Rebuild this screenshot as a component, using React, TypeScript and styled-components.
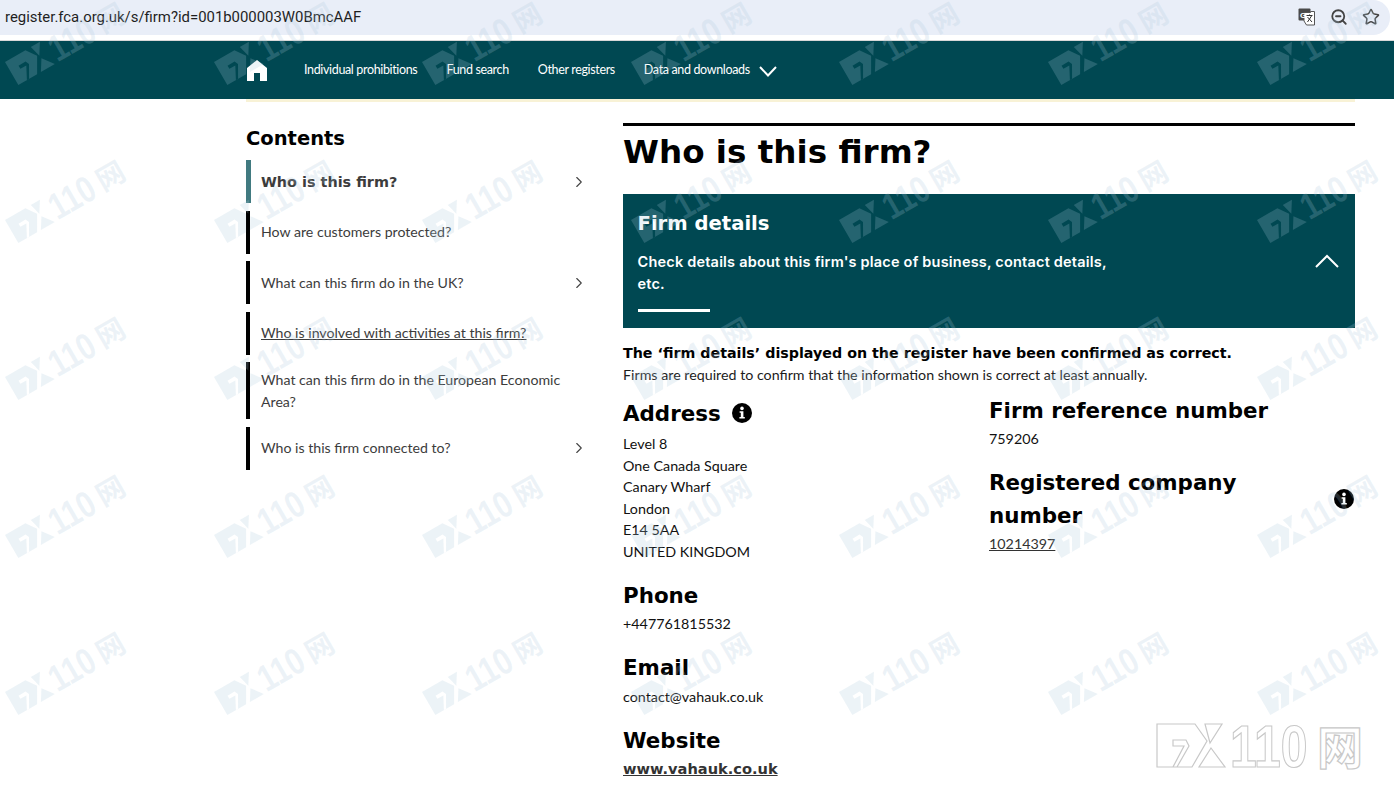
import React from 'react';
import styled, { createGlobalStyle } from 'styled-components';
import { ZoomOut, Star, ChevronRight } from 'lucide-react';

const heading = `'DejaVu Sans', Verdana, sans-serif`;
const body = `Lato, 'Liberation Sans', sans-serif`;

const GlobalStyle = createGlobalStyle`
  html, body {
    margin: 0;
    height: 794px;
    overflow: hidden;
    background: #fff;
    font-family: ${body};
  }
`;

const Page = styled.div`
  position: relative;
  width: 1394px;
  height: 794px;
  overflow: hidden;
`;

const AddressBar = styled.div`
  height: 35px;
  box-sizing: border-box;
  background: #e9eef8;
  border-radius: 0 17px 17px 0;
  margin-right: 4px;
  padding: 0 9px 2px 5px;
  display: flex;
  align-items: center;
  color: #1f1f1f;
`;

const Url = styled.div`
  flex: 1;
  font: 14.9px Roboto, sans-serif;
`;

const BarIcons = styled.div`
  display: flex;
  align-items: center;
  gap: 14px;
  color: #444;
  margin-right: 1px;
`;

const Strip = styled.div`
  height: 5px;
  border-bottom: 1px solid #d8d8d8;
`;

const Nav = styled.nav`
  height: 58px;
  background: #004852;
  padding-left: 247px;
  display: flex;
  align-items: center;
`;

const HomeLink = styled.div`
  display: flex;
  width: 57px;
`;

const NavLink = styled.a`
  color: #fff;
  font-size: 12.5px;
  letter-spacing: -0.35px;
  margin-right: 29px;
  margin-top: -1px;
  white-space: nowrap;
`;

const NavDropdown = styled.svg`
  margin-left: -20px;
  margin-top: 3px;
`;

const Rule = styled.div`
  height: 3px;
  margin: 0 39px 0 246px;
  background: #f8f2d6;
`;

const Content = styled.div`
  margin: 21px 39px 0 246px;
  display: grid;
  grid-template-columns: 344px 732px;
  column-gap: 33px;
`;

const ContentsTitle = styled.h2`
  font: bold 19.5px/24px ${heading};
  color: #000;
  margin: 4px 0 9px;
`;

const Menu = styled.ul`
  list-style: none;
  margin: 0;
  padding: 0;
  display: flex;
  flex-direction: column;
  gap: 7.5px;
`;

const MenuItem = styled.li<{ $active?: boolean }>`
  min-height: 43px;
  box-sizing: border-box;
  border-left: ${(p) => (p.$active ? '5px solid #417a80' : '4px solid #000')};
  padding: 6.5px 0 6.5px ${(p) => (p.$active ? '10px' : '11px')};
  display: flex;
  align-items: center;
  justify-content: space-between;
  color: #3c3c3c;
  font: ${(p) => (p.$active ? `bold 14.4px/22px ${heading}` : `14.15px/22px ${body}`)};
`;

const MenuText = styled.span<{ $underline?: boolean }>`
  max-width: 320px;
  text-decoration: ${(p) => (p.$underline ? 'underline' : 'none')};
`;

const Chevron = styled(ChevronRight)`
  flex: none;
  margin-right: 2px;
  color: #444;
`;

const Main = styled.main`
  border-top: 3px solid #000;
`;

const Title = styled.h1`
  font: bold 32.6px/48px ${heading};
  color: #000;
  margin: 2px 0 18px;
`;

const Hero = styled.section`
  height: 134px;
  box-sizing: border-box;
  background: #004852;
  padding: 16px 15px 0 14.5px;
  color: #fff;
  display: flex;
  flex-direction: column;
`;

const HeroTitle = styled.h2`
  font: bold 19.6px/28px ${heading};
  margin: 0 0 13px;
`;

const HeroRow = styled.div`
  display: flex;
  justify-content: space-between;
  align-items: flex-start;
`;

const HeroText = styled.p`
  font: 600 14.5px/22px Inter, 'Open Sans', sans-serif;
  letter-spacing: 0.2px;
  margin: 0;
  width: 480px;
`;

const HeroChevron = styled.svg`
  margin: 3px 1.5px 0 0;
`;

const HeroBar = styled.div`
  width: 72px;
  height: 3px;
  background: #fff;
  margin-top: 14px;
`;

const Confirmed = styled.p`
  font: bold 14.25px/20px ${heading};
  color: #000;
  margin: 15px 0 0;
`;

const Note = styled.p`
  font: 14.25px/20px ${body};
  color: #1c1c1c;
  margin: 2px 0 0;
`;

const Columns = styled.div`
  display: grid;
  grid-template-columns: 366px 366px;
`;

const Column = styled.div<{ $top: number }>`
  padding-top: ${(p) => p.$top}px;
`;

const FieldHead = styled.h3`
  font: bold 21.4px/33px ${heading};
  color: #000;
  margin: 0;
  display: flex;
  align-items: center;
`;

const InfoIcon = styled.svg<{ $push?: boolean }>`
  flex: none;
  margin-left: ${(p) => (p.$push ? 'auto' : '11px')};
  margin-right: ${(p) => (p.$push ? '1px' : '0')};
  margin-top: ${(p) => (p.$push ? '1px' : '-2px')};
`;

const FieldValue = styled.div<{ $top?: number; $gap?: number }>`
  font: 14.3px/21.6px ${body};
  color: #111;
  margin: ${(p) => p.$top ?? 1.2}px 0 ${(p) => p.$gap ?? 16.5}px;
`;

const PlainLink = styled.a`
  color: #333;
  text-decoration: underline;
`;

const BoldLink = styled.a`
  display: block;
  margin-top: 1.7px;
  font: bold 14.6px/21px ${heading};
  color: #333;
  text-decoration: underline;
`;

const Watermarks = styled.div`
  position: absolute;
  inset: 0 0 auto 5px;
  display: grid;
  grid-template-columns: repeat(7, 208.6px);
  grid-auto-rows: 157.6px;
  pointer-events: none;
`;

const WatermarkArt = styled.svg`
  overflow: visible;
`;

const CornerLogo = styled.svg`
  position: absolute;
  left: 1157px;
  top: 724px;
  overflow: visible;
  pointer-events: none;
`;

type MarkProps = { fill: string; stroke?: string };

// fx110 mark, drawn on a 205x46 box
const Mark = ({ fill, stroke = 'none' }: MarkProps) => (
  <g fill={fill} stroke={stroke} strokeWidth={stroke === 'none' ? 0 : 1.2}>
    <path d="M0 0H38L50 17L35 43H0ZM16 16V22H27L16 43H20L32 22L29 16Z" fillRule="evenodd" />
    <path d="M48 0H65L53 19Z" />
    <path d="M54 24L68 43H42Z" />
    <g transform="translate(73 43) scale(0.8 1)">
      <text fontFamily="'Liberation Sans', sans-serif" fontWeight="700" fontSize="60">
        110
      </text>
    </g>
    <text x="160" y="40" fontFamily="'Noto Sans CJK SC', sans-serif" fontWeight="700" fontSize="46">
      网
    </text>
  </g>
);

const Watermark = () => (
  <WatermarkArt width="124" height="90" viewBox="0 0 124 90">
    <g transform="translate(0 62) rotate(-30) scale(0.62)">
      <Mark fill="rgba(170,200,220,0.22)" />
    </g>
  </WatermarkArt>
);

const Info = ({ push }: { push?: boolean }) => (
  <InfoIcon $push={push} width="20" height="20" viewBox="0 0 20 20">
    <circle cx="10" cy="10" r="10" fill="#000" />
    <circle cx="10" cy="5.4" r="1.8" fill="#fff" />
    <path d="M7.6 8.2H11.4V14H12.8V15.6H7.4V14H8.8V9.8H7.6Z" fill="#fff" />
  </InfoIcon>
);

const TranslateIcon = () => (
  <svg width="18" height="18" viewBox="0 0 18 18">
    <rect x="0.5" y="0.5" width="12" height="12" rx="1" fill="#4a4a4a" />
    <path d="M6 4.5H12.5V3.5H16.5V17H8.5L6 13Z" fill="#fff" stroke="#555" />
    <path d="M8.5 7.5H14.5M11.5 6.5V8M13.5 8L9.5 14M9.5 9L14 14" stroke="#333" fill="none" />
    <text x="2" y="10" fontFamily="'Liberation Sans', sans-serif" fontWeight="700" fontSize="8" fill="#fff">G</text>
  </svg>
);

const menu = [
  { label: 'Who is this firm?', active: true, more: true },
  { label: 'How are customers protected?' },
  { label: 'What can this firm do in the UK?', more: true },
  { label: 'Who is involved with activities at this firm?', underline: true },
  { label: 'What can this firm do in the European Economic Area?' },
  { label: 'Who is this firm connected to?', more: true },
];

const App = () => (
  <Page>
    <GlobalStyle />
    <AddressBar>
      <Url>register.fca.org.uk/s/firm?id=001b000003W0BmcAAF</Url>
      <BarIcons>
        <TranslateIcon />
        <ZoomOut size={18} strokeWidth={2.4} />
        <Star size={18} />
      </BarIcons>
    </AddressBar>
    <Strip />
    <Nav>
      <HomeLink>
        <svg width="20" height="21" viewBox="0 0 20 21">
          <path d="M10 0L20 8V21H13V13H7V21H0V8Z" fill="#fff" />
        </svg>
      </HomeLink>
      <NavLink>Individual prohibitions</NavLink>
      <NavLink>Fund search</NavLink>
      <NavLink>Other registers</NavLink>
      <NavLink>Data and downloads</NavLink>
      <NavDropdown width="18" height="11" viewBox="0 0 18 11">
        <path d="M1 1L9 9.5L17 1" fill="none" stroke="#fff" strokeWidth="2" />
      </NavDropdown>
    </Nav>
    <Rule />
    <Content>
      <aside>
        <ContentsTitle>Contents</ContentsTitle>
        <Menu>
          {menu.map((item) => (
            <MenuItem key={item.label} $active={item.active}>
              <MenuText $underline={item.underline}>{item.label}</MenuText>
              {item.more && <Chevron size={18} strokeWidth={1.5} />}
            </MenuItem>
          ))}
        </Menu>
      </aside>
      <Main>
        <Title>Who is this firm?</Title>
        <Hero>
          <HeroTitle>Firm details</HeroTitle>
          <HeroRow>
            <HeroText>Check details about this firm's place of business, contact details, etc.</HeroText>
            <HeroChevron width="24" height="14" viewBox="0 0 24 14">
              <path d="M1 13L12 2L23 13" fill="none" stroke="#fff" strokeWidth="2" />
            </HeroChevron>
          </HeroRow>
          <HeroBar />
        </Hero>
        <Confirmed>The ‘firm details’ displayed on the register have been confirmed as correct.</Confirmed>
        <Note>Firms are required to confirm that the information shown is correct at least annually.</Note>
        <Columns>
          <Column $top={12}>
            <FieldHead>
              Address
              <Info />
            </FieldHead>
            <FieldValue $top={3}>
              Level 8
              <br />
              One Canada Square
              <br />
              Canary Wharf
              <br />
              London
              <br />
              E14 5AA
              <br />
              UNITED KINGDOM
            </FieldValue>
            <FieldHead>Phone</FieldHead>
            <FieldValue>+447761815532</FieldValue>
            <FieldHead>Email</FieldHead>
            <FieldValue>contact@vahauk.co.uk</FieldValue>
            <FieldHead>Website</FieldHead>
            <BoldLink>www.vahauk.co.uk</BoldLink>
          </Column>
          <Column $top={9}>
            <FieldHead>Firm reference number</FieldHead>
            <FieldValue $gap={16}>759206</FieldValue>
            <FieldHead>
              <span>
                Registered company
                <br />
                number
              </span>
              <Info push />
            </FieldHead>
            <FieldValue>
              <PlainLink>10214397</PlainLink>
            </FieldValue>
          </Column>
        </Columns>
      </Main>
    </Content>
    <Watermarks>
      {Array.from({ length: 35 }, (_, i) => (
        <Watermark key={i} />
      ))}
    </Watermarks>
    <CornerLogo width="206" height="47" viewBox="0 0 206 47">
      <Mark fill="#fff" stroke="#c8c8c8" />
    </CornerLogo>
  </Page>
);

export default App;
